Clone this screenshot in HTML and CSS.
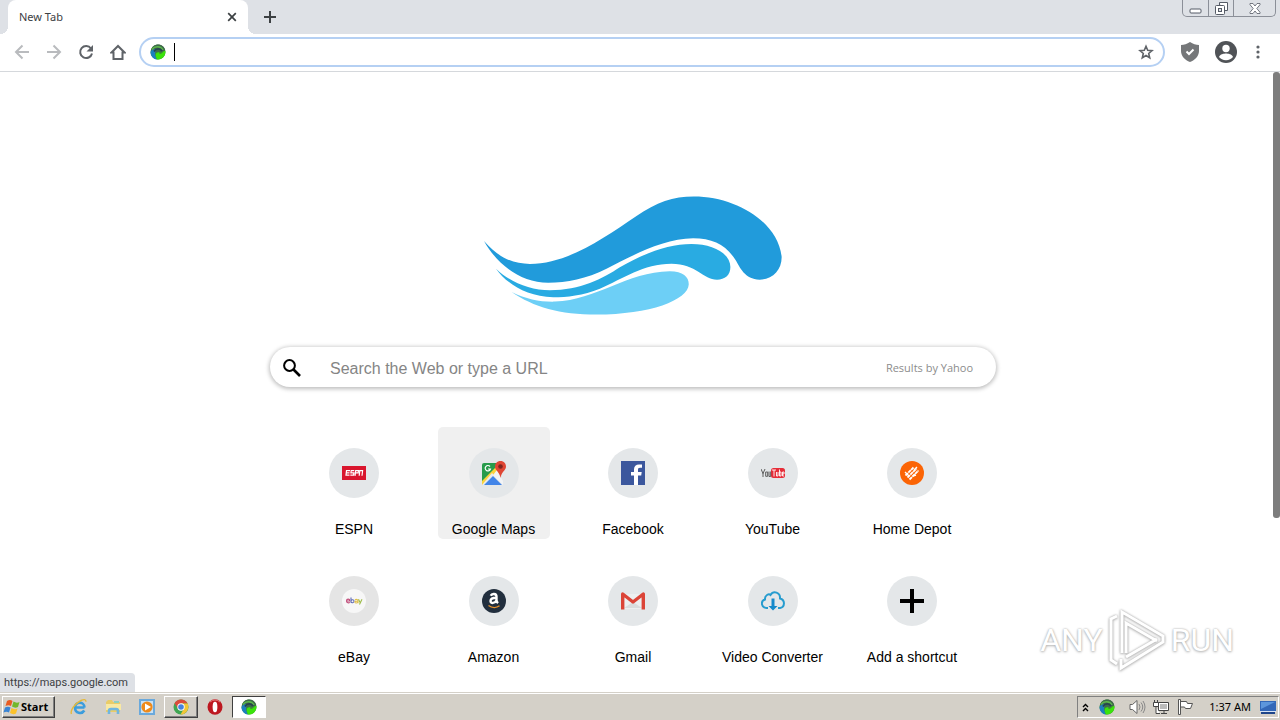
FILE: index.html
```html
<!DOCTYPE html>
<html lang="en">
<head>
<meta charset="utf-8">
<meta name="viewport" content="width=device-width, initial-scale=1">
<title>New Tab</title>
<link rel="stylesheet" href="styles.css">
</head>
<body class="desktop">
<svg class="sprite" aria-hidden="true">
  <symbol id="orb" viewBox="0 0 16 16">
    <circle cx="8" cy="8" r="7.500" fill="#3d8a35"/>
    <path d="M.8 7C1.500 2.500 5 .5 8 .5c4 0 6.500 2.500 7.300 6L8 9z" fill="#3f6a4c"/>
    <path d="M.5 8C2 5 5 4.500 7 5.500 4.500 7 4.500 11 7 15.400 3 15 .5 12 .5 8z" fill="#1c80bd"/>
    <path d="M2 5.500C5 1.500 11 2 13 6" fill="none" stroke="#5cb84a" stroke-width="1.400"/>
    <path d="M4 7.500c2-3.500 6.500-3.500 8-.5" fill="none" stroke="#27444d" stroke-width="1.800"/>
    <path d="M7 15.400C4.500 11 6 7.500 9.500 8.500c-1 1 .5 2 2 1s2-3 3.900-2.500c.4 5-3.400 8.900-8.400 8.400z" fill="#3be30c"/>
  </symbol>
</svg>

<header class="tabstrip">
  <div class="tab">
    <span class="tab-title">New Tab</span>
    <button class="plain" aria-label="Close tab"><svg width="10" height="10" viewBox="0 0 10 10"><path d="M1.200 1.200l7.600 7.600M8.800 1.200L1.200 8.800" stroke="#3c4043" stroke-width="1.700"/></svg></button>
  </div>
  <button class="plain new-tab" aria-label="New tab"><svg width="12" height="12" viewBox="0 0 12 12"><path d="M6 0v12M0 6h12" stroke="#3c4043" stroke-width="2"/></svg></button>
  <div class="window-buttons">
    <button class="win" aria-label="Minimize"><svg width="13" height="6" viewBox="0 0 13 6"><rect x="1" y="1" width="11" height="4" rx="1" fill="#fff" stroke="#555b66"/></svg></button>
    <button class="win" aria-label="Restore"><svg width="13" height="13" viewBox="0 0 13 13"><path d="M4.500 .5h8v8h-3M4.500 3.500v-3" fill="#fff" stroke="#555b66"/><rect x=".5" y="3.500" width="9" height="9" rx="1" fill="#fff" stroke="#555b66"/><rect x="3.500" y="6.500" width="3" height="3" fill="#dee1e6" stroke="#555b66"/></svg></button>
    <button class="win win-close" aria-label="Close"><svg width="12" height="11" viewBox="0 0 12 11"><path d="M1 .5h3l2 2.500L8 .5h3v1.200L7.800 5.500 11 9.300v1.200H8L6 8l-2 2.500H1V9.300l3.200-3.800L1 1.700z" fill="#fff" stroke="#555b66" stroke-width=".8"/></svg></button>
  </div>
</header>

<nav class="toolbar" aria-label="Browser toolbar">
  <button class="tool" aria-label="Back"><svg width="16" height="16" viewBox="0 0 16 16" fill="none" stroke="#b9bbbe" stroke-width="2"><path d="M15 8H2M8.500 1.500L2 8l6.500 6.500"/></svg></button>
  <button class="tool" aria-label="Forward"><svg width="16" height="16" viewBox="0 0 16 16" fill="none" stroke="#b9bbbe" stroke-width="2"><path d="M1 8h13M7.500 1.500L14 8l-6.500 6.500"/></svg></button>
  <button class="tool" aria-label="Reload"><svg width="16" height="16" viewBox="0 0 16 16"><path d="M13 4.500A6 6 0 1 0 14 9.500" fill="none" stroke="#5f6368" stroke-width="2"/><path d="M15 1v6.500H8.500z" fill="#5f6368"/></svg></button>
  <button class="tool" aria-label="Home"><svg width="16" height="16" viewBox="0 0 16 16"><path d="M1.500 8.500L8 2l6.500 6.500h-2V15h-9V8.500z" fill="none" stroke="#5f6368" stroke-width="2"/></svg></button>
  <div class="omnibox">
    <svg width="16" height="16"><use href="#orb"/></svg>
    <span class="caret"></span>
    <input class="address" type="text" aria-label="Address and search bar">
    <button class="plain" aria-label="Bookmark this page"><svg width="16" height="16" viewBox="0 0 16 16"><path d="M8 2.300l1.700 4 4.300.4-3.300 2.800 1 4.300L8 11.500l-3.700 2.300 1-4.300L2 6.700l4.300-.4z" fill="none" stroke="#5f6368" stroke-width="1.600"/></svg></button>
  </div>
  <button class="tool tool-wide" aria-label="Extension"><svg width="20" height="20" viewBox="0 0 20 20"><path d="M10 0c3 2 6 3 9 3v6c0 5-4 9-9 11C5 18 1 14 1 9V3c3 0 6-1 9-3z" fill="#757779"/><path d="M6.500 9.500l2.500 2.500 4.500-4.500" fill="none" stroke="#fff" stroke-width="2"/></svg></button>
  <button class="tool tool-wide" aria-label="Profile"><svg width="22" height="22" viewBox="0 0 22 22"><circle cx="11" cy="11" r="11" fill="#505357"/><circle cx="11" cy="7.500" r="3.700" fill="#fff"/><path d="M4 16c1-3 5-3.500 7-3.500s6 .5 7 3.500c-1.500 2-4 3.200-7 3.200S5.500 18 4 16z" fill="#fff"/></svg></button>
  <button class="tool tool-menu" aria-label="Menu"><svg width="4" height="14" viewBox="0 0 4 14" fill="#5f6368"><circle cx="2" cy="2" r="1.600"/><circle cx="2" cy="7" r="1.600"/><circle cx="2" cy="12" r="1.600"/></svg></button>
</nav>

<main class="page">
  <svg class="logo" viewBox="42 32 895 357" role="img" aria-label="Wave logo">
    <path fill="#219bdb" d="M42 167C85 217 130 236 180 236C290 236 400 160 500 92C560 50 610 33 672 33C800 33 925 110 936 215C936 255 908 283 870 283C825 283 810 245 798 225C770 180 730 159 670 159C580 159 480 215 410 250C350 280 290 292 235 292C150 292 80 235 42 167Z"/>
    <path fill="#29abe2" d="M78 250C120 290 180 315 240 315C330 315 400 280 450 246C530 200 600 176 665 176C730 176 782 205 782 245C782 270 765 283 742 283C700 283 680 235 605 235C520 235 460 280 390 310C340 330 290 336 250 336C170 334 110 295 78 250Z"/>
    <path fill="#6dcff6" d="M125 320C170 342 210 350 255 349C380 345 470 260 600 258C640 258 657 275 657 297C655 345 540 388 380 388C270 388 190 365 125 320Z"/>
  </svg>

  <form class="search">
    <svg width="18" height="18" viewBox="0 0 18 18" fill="none" stroke="#000"><circle cx="6.500" cy="6.500" r="5.400" stroke-width="2"/><path d="M10.500 10.500l6.500 6.500" stroke-width="2.600"/></svg>
    <input class="search-input" type="text" aria-label="Search" placeholder="Search the Web or type a URL">
    <span class="provider">Results by Yahoo</span>
  </form>

  <div class="tiles">
    <a class="tile" href="#espn"><span class="disc"><svg width="24" height="24" viewBox="0 0 24 24"><path fill="#d9152d" d="M0 5h24v14H0z"/><g fill="none" stroke="#fff" stroke-width="1.200"><path d="M8 9.700H4.500L4 14.200h3.500M4 11.900h3.500M12.300 9.700H9.200l-.3 2.200h3l-.3 2.300H8.300M13 14.800l.7-5.100h2.800l-.3 2.200h-2.800M17.200 14.800l.6-5.100h2.800l-.6 5.100"/></g></svg></span><span>ESPN</span></a>
    <a class="tile tile-active" href="https://maps.google.com"><span class="disc"><svg width="24" height="24" viewBox="0 0 24 24"><path fill="#279b4b" d="M0 4q0-2 2-2h18v20q0 2-2 2H2q-2 0-2-2z"/><path fill="#dfe3e6" d="M9 13l11-9v20H2z"/><path fill="#fbd33b" d="M0 20L17 3l4 7-13 9-5 5H0z"/><path fill="#e9eaec" d="M10 12l11 12H0z"/><path fill="#4285e8" d="M2 24l9-9 9 9z"/><path d="M15 9l6 11v4L11 14z" fill="#f2f3f5"/><path d="M18.500 0C15 0 13 2.500 13 5.500c0 4 4.500 5 5.500 11.500 1-6.500 5.500-7.500 5.500-11.500C24 2.500 22 0 18.500 0z" fill="#df4634"/><circle cx="18.500" cy="5.500" r="2.300" fill="#7f251f"/><path d="M8 5.500a2.700 2.700 0 1 0 .5 2.500H6" fill="none" stroke="#fff" stroke-width="1.200"/></svg></span><span>Google Maps</span></a>
    <a class="tile" href="#facebook"><span class="disc"><svg width="24" height="24" viewBox="0 0 24 24"><path fill="#3b579d" d="M0 0h24v24H0z"/><path fill="#fff" d="M13 24v-9.500h-3V11h3V8.200C13 5 15 3.400 18 3.400l3 .1v3.300h-2c-1.500 0-2 .7-2 1.900V11h3.700l-.5 3.500H17V24z"/></svg></span><span>Facebook</span></a>
    <a class="tile" href="#youtube"><span class="disc"><svg width="24" height="24" viewBox="0 0 24 24"><rect x="10" y="7" width="14" height="10" rx="2.500" fill="#e62d38"/><path d="M0 8l2 4.500L4 8M2 12v4M4.700 11h2v4.300h-2zM8 10.500v5h1.700v-5" fill="none" stroke="#5c5c5c"/><path d="M11 9h4M13 9v6.500M15.500 11v4h1.500v-4M18.500 8.500v6.500h1.500v-4h-1.500M23 15h-1.500v-4H23v2h-1.500" fill="none" stroke="#fff" stroke-width=".9"/></svg></span><span>YouTube</span></a>
    <a class="tile" href="#homedepot"><span class="disc"><svg width="24" height="24" viewBox="0 0 24 24"><circle cx="12" cy="12" r="12" fill="#fb6405"/><g stroke="#fff" fill="none" stroke-width="1.800"><path d="M5.500 14.500l8-8M7.500 16.500l9-9M9.500 18.500l9-9" stroke-dasharray="3.500 .5"/><path d="M14 9l3-3M5 11l4 4M13 15l3-1" stroke-width="1.400"/></g></svg></span><span>Home Depot</span></a>
    <a class="tile" href="#ebay"><span class="disc disc-gray"><svg width="24" height="24" viewBox="0 0 24 24"><circle cx="12" cy="12" r="12" fill="#f7f7f7"/><g fill="none" stroke-width="1.100"><path stroke="#c04a78" d="M4.500 12h3.300c0-2.500-3.300-2.500-3.300 0 0 2.200 2.500 2.300 3.200 1.200"/><path stroke="#5f6ab5" d="M9 8.500v5.300M9 11.800c.8-1.800 3.200-1.200 3 .4-.2 1.800-2.400 2-3 .6"/><path stroke="#dfbe4a" d="M13 11c1-1 3-.7 3 .7v2.500M16 12c-3 0-3.500.7-3 1.500.5.800 2.500.6 3-.5"/><path stroke="#9dbc48" d="M16.500 10.300l1.800 3.600M20 10.300L17.500 15.500"/></g></svg></span><span>eBay</span></a>
    <a class="tile" href="#amazon"><span class="disc"><svg width="24" height="24" viewBox="0 0 24 24"><circle cx="12" cy="12" r="12" fill="#222f3e"/><path d="M8.800 6.800c1-2.600 5.700-2.400 5.700.7V11c0 1.500.5 2.200 1.500 3.200M14.500 8.800c-4.500 0-6 1.200-6 3.200 0 2.800 4.500 2.600 6-.8" fill="none" stroke="#fff" stroke-width="2.400"/><path d="M6.500 16.500c3.500 2.600 8 2.600 11 .3" fill="none" stroke="#e8922c" stroke-width="1.400"/></svg></span><span>Amazon</span></a>
    <a class="tile" href="#gmail"><span class="disc"><svg width="24" height="24" viewBox="0 0 24 24"><path d="M3 5h18v15H3z" fill="#eceff0"/><path d="M3 19l9-6 9 6z" fill="#d9dcdd"/><path d="M1.700 20.500V5L12 13 22.300 5v15.500" fill="none" stroke="#db4437" stroke-width="3.400" stroke-linejoin="round"/></svg></span><span>Gmail</span></a>
    <a class="tile" href="#video"><span class="disc"><svg width="24" height="24" viewBox="0 0 24 24"><path d="M7 19H5.500C-.5 18-.2 11.500 4 10.500 3.500 6 8 4.500 9.500 6c3-5 10-2.500 9.500 3.500 5.500 1.500 5 8.500 0 9.500h-2" fill="none" stroke="#269ccf" stroke-width="2"/><path d="M10.500 9.500h3V17h3L12 21.500 7.500 17h3z" fill="#168acb"/></svg></span><span>Video Converter</span></a>
    <a class="tile" href="#add"><span class="disc"><svg width="24" height="24" viewBox="0 0 24 24"><path d="M12 0v24M0 12h24" stroke="#000" stroke-width="4"/></svg></span><span>Add a shortcut</span></a>
  </div>

  <div class="scrollbar"></div>
  <div class="status">https://maps.google.com</div>
  <div class="watermark">
    <span>ANY</span>
    <svg width="58" height="62" viewBox="0 0 58 62" fill="none" stroke="#fff" stroke-width="3"><path d="M9 7L3 10v41l6 4M14 44V3l41 24v6L13 59v-9M18 44V14l31 18M18 48l31-18"/></svg>
    <span>RUN</span>
  </div>
</main>

<footer class="taskbar">
  <button class="start"><svg width="18" height="16" viewBox="0 0 18 16"><path fill="#e85b22" d="M4 2q3-2 5.500 0L8 7Q5.500 5.500 2.500 7z"/><path fill="#72b82b" d="M10.500 2.500q3 2 6 .5L15 8q-3 1.500-6-.5z"/><path fill="#3984d4" d="M2 8.500q3-1.500 5.500 0l-1.500 5q-2.500-1.500-5.500 0z"/><path fill="#fbc22a" d="M8.500 9q3 2 6 .5l-1.500 5q-3 1.500-6-.5z"/></svg><span>Start</span></button>
  <div class="launch">
    <button class="app" aria-label="Internet Explorer"><svg width="18" height="18" viewBox="0 0 18 18"><path d="M14.500 9.500H5M14.300 12.500c-2.500 4-9.300 3-9.300-3 0-6 9.300-6.500 9.500 0" fill="none" stroke="#3b9ddd" stroke-width="2.600"/><path d="M1.500 16C0 13 4 6 11 2.500c3-1.500 5-1.200 5 1.200" fill="none" stroke="#e4b93c" stroke-width="1.400"/></svg></button>
    <button class="app" aria-label="File Explorer"><svg width="17" height="16" viewBox="0 0 17 16"><path fill="#e9cc68" d="M1 3l2-2h4l1 2h7v10H1z"/><path fill="#f9e9a2" d="M1 5h15v6H1z"/><path fill="#8fd0c0" d="M9 2h5v2H9z"/><path d="M4 15v-3q0-2 2-2h5q2 0 2 2v3" fill="none" stroke="#70b6df" stroke-width="2.600"/></svg></button>
    <button class="app" aria-label="Media Player"><svg width="16" height="16" viewBox="0 0 16 16"><path fill="#6aa9dc" d="M0 0h16v16H0z"/><path fill="#c9e1f4" d="M2 2h12v12H2z"/><circle cx="8" cy="8" r="5.600" fill="#ef8a1a"/><path fill="#fff" d="M6 4.500l6 3.500-6 3.500z"/></svg></button>
    <button class="app app-raised" aria-label="Chrome"><svg width="16" height="16" viewBox="0 0 16 16"><circle cx="8" cy="8" r="7.500" fill="#3fa652"/><path fill="#dc4b3b" d="M1.500 4.300C4-.8 12-.8 14.700 4.500H8L5 9.500z"/><path fill="#f3c636" d="M8 4.500h6.700C17 10 13 15.500 7.500 15.500L11 9.500z"/><circle cx="8" cy="8" r="3.700" fill="#fff"/><circle cx="8" cy="8" r="2.800" fill="#4682df"/></svg></button>
    <button class="app" aria-label="Opera"><svg width="16" height="16" viewBox="0 0 16 16"><ellipse cx="8" cy="8" rx="7.500" ry="7.700" fill="#bd1820"/><ellipse cx="8" cy="8" rx="2.400" ry="5.300" fill="#fff"/><path d="M3 3q5-4 10 0" fill="none" stroke="#e87a79"/></svg></button>
    <button class="app app-pressed" aria-label="Browser window"><svg width="16" height="16"><use href="#orb"/></svg></button>
  </div>
  <div class="tray">
    <svg width="7" height="9" viewBox="0 0 7 9"><path d="M1 4l2.500-2.500L6 4M1 8l2.500-2.500L6 8" fill="none" stroke="#000" stroke-width="1.400"/></svg>
    <svg class="tray-orb" width="16" height="16"><use href="#orb"/></svg>
    <svg width="17" height="16" viewBox="0 0 17 16" fill="none" stroke="#666"><path fill="#fff" d="M1 5.500h2.500L8 1.500v13l-4.500-4H1z"/><path d="M10 5q2 3 0 6M12 3.500q3.500 4.500 0 9M14 2q4 6 0 12" stroke="#888"/></svg>
    <svg width="17" height="16" viewBox="0 0 17 16" fill="#fff" stroke="#444"><path d="M5.500 3.500h10v8h-10zM8 14.500h6M11 11.500v3M.5 3.500h5v4h-5zM3 7.500v7h4M1.500 1v2.500M4.500 1v2.500"/><path d="M7 5h7v5H7z" fill="#bbb" stroke="none"/></svg>
    <svg width="17" height="16" viewBox="0 0 17 16" fill="#fff" stroke="#555"><path d="M1.500 .5h2v15h-2zM3.500 2.500h6l1 2h5l-2 5h-5l-1-1.500h-4z"/></svg>
    <time class="clock">1:37 AM</time>
    <button class="plain" aria-label="Show desktop"><svg width="16" height="14" viewBox="0 0 16 14"><path fill="#3468b8" d="M0 1h16v10H0z"/><path fill="#5d96dc" d="M1 2h14L1 9z"/><path fill="#d7e4f5" d="M0 11h16v1H0z"/><path fill="#1e458a" d="M1 12h14v2H1z"/></svg></button>
  </div>
</footer>
</body>
</html>
```

FILE: styles.css
```css
* { box-sizing: border-box; }

.desktop {
  margin: 0;
  height: 100vh;
  display: flex;
  flex-direction: column;
  overflow: hidden;
  background: #fff;
  color: #000;
  font: 11px/16px "Noto Sans", "Open Sans", sans-serif;
}

.sprite { position: absolute; width: 0; height: 0; }
svg { display: block; flex: none; }
button { font: inherit; color: inherit; padding: 0; border: 0; background: none; }
.plain { display: flex; }

.tabstrip {
  flex: none;
  height: 34px;
  padding: 0 4px 0 8px;
  display: flex;
  align-items: center;
  background: #dee1e6;
}
.tab {
  position: relative;
  width: 240px;
  height: 34px;
  padding: 0 11px;
  display: flex;
  align-items: center;
  justify-content: space-between;
  background: #fff;
  border-radius: 8px 8px 0 0;
}
.tab::before,
.tab::after {
  content: "";
  position: absolute;
  bottom: 0;
  width: 8px;
  height: 8px;
}
.tab::before { right: 100%; background: radial-gradient(circle at 0 0, #dee1e6 8px, #fff 8px); }
.tab::after { left: 100%; background: radial-gradient(circle at 100% 0, #dee1e6 8px, #fff 8px); }
.tab-title { color: #3c4043; }
.new-tab { margin-left: 16px; }
.window-buttons {
  align-self: flex-start;
  display: flex;
  height: 17px;
  margin-left: auto;
  border: 1px solid #8b8f98;
  border-top: 0;
  border-radius: 0 0 5px 5px;
}
.win { width: 25px; display: flex; align-items: center; justify-content: center; }
.win:first-child { padding-top: 5px; }
.win + .win { border-left: 1px solid #8b8f98; }
.win-close { width: 42px; }

.toolbar {
  flex: none;
  height: 38px;
  padding: 0 8px 2px 6px;
  display: flex;
  align-items: center;
  border-bottom: 1px solid #d5d8dc;
}
.tool { width: 32px; height: 32px; display: flex; align-items: center; justify-content: center; }
.tool-wide { width: 36px; }
.tool-menu { width: 28px; }
.omnibox {
  flex: 1;
  height: 30px;
  margin: 0 7px 0 5px;
  padding: 0 9px;
  display: flex;
  align-items: center;
  border: 2px solid #b5d0f3;
  border-radius: 15px;
}
.caret { width: 1px; height: 18px; margin-left: 8px; background: #000; }
.address { flex: 1; min-width: 0; border: 0; outline: 0; background: none; font: inherit; }

.page {
  flex: 1;
  min-height: 0;
  position: relative;
  padding: 124px 14px 0 0;
  display: flex;
  flex-direction: column;
  align-items: center;
  font-family: "Liberation Sans", Arial, sans-serif;
}
.logo { width: 298px; height: 119px; }
.search {
  width: 726px;
  max-width: 90%;
  height: 40px;
  margin: 32px 0 40px;
  padding: 1px 23px 0 13px;
  flex: none;
  display: flex;
  align-items: center;
  border-radius: 20px;
  box-shadow: 0 1px 4px 1px #bdbdbd;
}
.search-input {
  flex: 1;
  min-width: 0;
  height: 24px;
  margin-left: 29px;
  padding: 2px 0 0;
  border: 0;
  outline: 0;
  background: none;
  font: 16px/20px "Liberation Sans", Arial, sans-serif;
}
.search-input::placeholder { color: #858585; opacity: 1; }
.provider { padding-top: 1px; color: #8c8c8c; font: 11px/16px "Open Sans", "Noto Sans", sans-serif; }

.tiles {
  width: 670px;
  max-width: 90%;
  display: grid;
  grid-template-columns: repeat(5, 112px);
  justify-content: space-between;
  row-gap: 16px;
}
.tile {
  height: 112px;
  padding-top: 21px;
  display: flex;
  flex-direction: column;
  align-items: center;
  gap: 22px;
  border-radius: 5px;
  color: #000;
  font-size: 14px;
  line-height: 18px;
  text-decoration: none;
  white-space: nowrap;
}
.tile-active { background: #f0f0f0; }
.disc {
  width: 50px;
  height: 50px;
  flex: none;
  display: flex;
  align-items: center;
  justify-content: center;
  border-radius: 50%;
  background: #e4e7e9;
}
.disc-gray { background: #e5e5e5; }

.scrollbar {
  position: absolute;
  top: 0;
  right: 0;
  width: 7px;
  height: 72%;
  border-radius: 3px;
  background: #7d7d7d;
}
.status {
  position: absolute;
  left: 0;
  bottom: 0;
  padding: 2px 7px 1px 4px;
  border-radius: 0 4px 0 0;
  background: #dee1e6;
  color: #3c4043;
  font: 11px/16px Roboto, "Open Sans", sans-serif;
}
.watermark {
  position: absolute;
  right: 46px;
  bottom: 21px;
  display: flex;
  align-items: center;
  gap: 5px;
  color: #fff;
  font: 32px/40px Roboto, "Liberation Sans", sans-serif;
  text-shadow: 0 0 2px #aaa, 0 1px 3px #bbb;
}
.watermark svg { filter: drop-shadow(0 0 1px #aaa) drop-shadow(0 1px 1px #ccc); }

.taskbar {
  flex: none;
  height: 28px;
  padding: 3px 1px 2px 2px;
  display: flex;
  align-items: center;
  border-top: 1px solid #d4d0c8;
  box-shadow: inset 0 1px #fff;
  background: #d4d0c8;
}
.start {
  height: 22px;
  width: 53px;
  display: flex;
  align-items: center;
  border: 1px solid;
  border-color: #fff #404040 #404040 #fff;
  box-shadow: inset -1px -1px #808080;
  font: bold 11px/16px "Open Sans", "DejaVu Sans", sans-serif;
}
.launch { display: flex; margin-left: 7px; }
.app {
  width: 34px;
  height: 22px;
  display: flex;
  align-items: center;
  justify-content: center;
}
.app-raised { border: 1px solid; border-color: #fff #404040 #404040 #fff; box-shadow: inset -1px -1px #808080; }
.app-pressed { border: 1px solid; border-color: #404040 #fff #fff #404040; background: #fff; }
.tray {
  height: 22px;
  margin-left: auto;
  padding: 0 2px 0 4px;
  display: flex;
  align-items: center;
  gap: 7px;
  border: 1px solid;
  border-color: #808080 #fff #fff #808080;
}
.tray-orb { margin: 0 7px 0 3px; }
.clock { margin: 0 2px 0 8px; white-space: nowrap; }
```
